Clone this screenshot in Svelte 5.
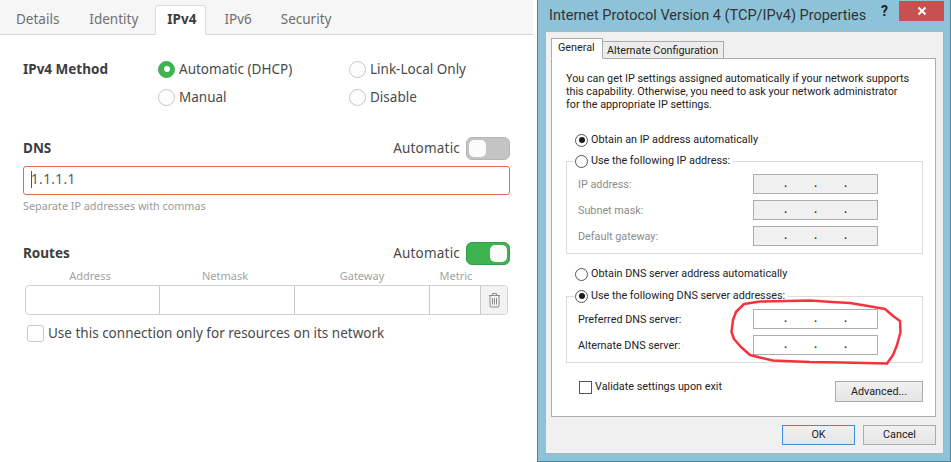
<script lang="ts">
	const tabs = ['Details', 'Identity', 'IPv4', 'IPv6', 'Security'];
	const methods = [
		{ label: 'Automatic (DHCP)', on: true },
		{ label: 'Link-Local Only', on: false },
		{ label: 'Manual', on: false },
		{ label: 'Disable', on: false }
	];
	const routeCols = ['Address', 'Netmask', 'Gateway', 'Metric'];
	const ipRows = ['IP address:', 'Subnet mask:', 'Default gateway:'];
	const dnsRows = ['Preferred DNS server:', 'Alternate DNS server:'];
</script>

{#snippet dots()}
	<span class="ip-dots"><i>.</i><i>.</i><i>.</i></span>
{/snippet}

<div class="page">
	<section class="linux">
		<nav class="strip">
			{#each tabs as tab}
				<span class="strip-tab" class:active={tab === 'IPv4'}>{tab}</span>
			{/each}
		</nav>

		<div class="method">
			<strong>IPv4 Method</strong>
			<div class="method-grid">
				{#each methods as m}
					<span class="option"><span class="radio" class:on={m.on}></span>{m.label}</span>
				{/each}
			</div>
		</div>

		<div class="head dns-head">
			<strong>DNS</strong>
			<span class="auto">Automatic<span class="switch"><span class="knob"></span></span></span>
		</div>
		<div class="dns-input"><span class="caret"></span>1.1.1.1</div>
		<p class="hint">Separate IP addresses with commas</p>

		<div class="head routes-head">
			<strong>Routes</strong>
			<span class="auto">Automatic<span class="switch on"><span class="knob"></span></span></span>
		</div>
		<div class="route-cols">
			{#each routeCols as col}<span>{col}</span>{/each}
		</div>
		<div class="route-row">
			<span></span><span></span><span></span><span></span>
			<span class="trash">
				<svg width="13" height="16" viewBox="0 0 13 16" fill="none" stroke="#8b8b8b">
					<path d="M1 3.5h11M4.5 3.5V1.500h4v2M2 3.5v10.5a1 1 0 0 0 1 1h7a1 1 0 0 0 1-1V3.5" />
					<path d="M4.5 6v6.5M6.500 6v6.5M8.500 6v6.5" />
				</svg>
			</span>
		</div>
		<label class="only"><span class="check"></span>Use this connection only for resources on its network</label>
	</section>

	<section class="win">
		<header class="title">
			<span class="title-text">Internet Protocol Version 4 (TCP/IPv4) Properties</span>
			<span class="help">?</span>
			<span class="close">
				<svg width="10" height="10" viewBox="0 0 10 10" stroke="#fff" stroke-width="2"><path d="M1.500 1.500l7 7M8.500 1.500l-7 7" /></svg>
			</span>
		</header>

		<div class="panel">
			<div class="win-tabs">
				<span class="win-tab active">General</span>
				<span class="win-tab">Alternate Configuration</span>
			</div>
			<div class="box">
				<p class="intro">
					You can get IP settings assigned automatically if your network supports<br />
					this capability. Otherwise, you need to ask your network administrator<br />
					for the appropriate IP settings.
				</p>
				<div class="win-opt first"><span class="win-radio on"></span>Obtain an IP address automatically</div>

				<fieldset class="group">
					<legend class="win-opt"><span class="win-radio"></span>Use the following IP address:</legend>
					{#each ipRows as row}
						<div class="ip-row disabled">
							<span>{row}</span>
							<span class="ip-input">{@render dots()}</span>
						</div>
					{/each}
				</fieldset>

				<div class="win-opt second"><span class="win-radio"></span>Obtain DNS server address automatically</div>

				<fieldset class="group dns">
					<legend class="win-opt"><span class="win-radio on"></span>Use the following DNS server addresses:</legend>
					{#each dnsRows as row}
						<div class="ip-row">
							<span>{row}</span>
							<span class="ip-input">{@render dots()}</span>
						</div>
					{/each}
				</fieldset>

				<div class="validate">
					<span class="win-check"></span>
					<span class="validate-text">Validate settings upon exit</span>
					<span class="win-btn advanced">Advanced...</span>
				</div>
			</div>
			<div class="actions">
				<span class="win-btn ok">OK</span>
				<span class="win-btn">Cancel</span>
			</div>
		</div>

		<!-- hand-drawn marker ring around the DNS fields -->
		<svg class="ring" width="951" height="462" viewBox="0 0 951 462" fill="none" stroke="#f6333d" stroke-width="2.5" stroke-linejoin="round">
			<path d="M760 301.5 L744 304 L736 312 L733 320 L731.5 332 L734 339 L741 347 L750 355 L762 358 L773 360.5 L810 362 L842 362.500 L887 363.500 L893 355 L897 345 L900.500 332 L900 321 L893 316 L885 309 L868 306 L850 303 L832 302 L810 300.500 Z" />
		</svg>
	</section>
</div>

<style>
	:global(body) {
		margin: 0;
		background: #fff;
	}

	.page {
		display: flex;
		width: 951px;
		height: 462px;
		overflow: hidden;
		background: #fff;
	}

	/* left: gnome network settings */
	.linux {
		width: 533px;
		flex: none;
		font-family: 'Noto Sans', sans-serif;
		font-size: 13.500px;
		color: #4a4a4a;
	}

	.linux strong {
		color: #3d3d3d;
		font-weight: 700;
	}

	.strip {
		display: flex;
		align-items: flex-end;
		height: 34px;
		padding-left: 3px;
		background: #f6f6f6;
		border-bottom: 1px solid #d6d6da;
	}

	.strip-tab {
		height: 30px;
		line-height: 27px;
		padding: 0 12px;
		margin-right: 4px;
		color: #6f6f6f;
		box-sizing: border-box;
		margin-bottom: -1px;
		border: 1px solid transparent;
	}

	.strip-tab:nth-child(4) {
		padding: 0 11px;
	}

	.strip-tab.active {
		padding: 0 9px 0 11px;
		margin-right: 6px;
		background: #fff;
		color: #3d3d3d;
		font-weight: 700;
		border-color: #dcdcdf;
		border-bottom-color: #fff;
		border-radius: 3px 3px 0 0;
	}

	.method {
		display: flex;
		margin: 20px 0 0 23px;
	}

	.method strong {
		width: 135px;
		line-height: 28px;
	}

	.method-grid {
		display: grid;
		grid-template-columns: 191px auto;
		grid-auto-rows: 28px;
		line-height: 27px;
	}

	.option {
		display: flex;
		align-items: center;
		gap: 4px;
	}

	.radio {
		width: 15px;
		height: 15px;
		border: 1px solid #c6c6c6;
		border-radius: 50%;
		background: #fdfdfd;
		position: relative;
	}

	.radio.on {
		background: #3eb34f;
		border-color: #3eb34f;
	}

	.radio.on::after {
		content: '';
		position: absolute;
		left: 4.5px;
		top: 4.5px;
		width: 6px;
		height: 6px;
		border-radius: 50%;
		background: #fff;
	}

	.head {
		display: flex;
		align-items: center;
		justify-content: space-between;
		height: 24px;
		margin: 0 23px;
	}

	.dns-head {
		margin-top: 25px;
	}

	.routes-head {
		margin-top: 27px;
	}

	.auto {
		display: flex;
		align-items: center;
		gap: 6px;
		letter-spacing: 0.2px;
	}

	.switch {
		display: flex;
		width: 44px;
		height: 23px;
		box-sizing: border-box;
		padding: 2px;
		border: 1px solid #b5b5b5;
		border-radius: 6px;
		background: #c4c4c4;
	}

	.switch.on {
		justify-content: flex-end;
		background: #3eb34f;
		border-color: #35a045;
	}

	.knob {
		width: 17px;
		height: 17px;
		border-radius: 5px;
		background: #fbfbfb;
	}

	.dns-input {
		display: flex;
		align-items: center;
		height: 29px;
		margin: 6px 23px 0;
		padding: 0 0 3px 7px;
		box-sizing: border-box;
		width: 487px;
		border: 1px solid #e4694f;
		border-radius: 3px;
		letter-spacing: 0.4px;
		color: #5a5a5a;
	}

	.caret {
		width: 1px;
		height: 17px;
		background: #555;
		margin-right: -1px;
	}

	.hint {
		margin: 3px 0 0 23px;
		font-size: 10.800px;
		line-height: 16px;
		color: #9a9a9a;
	}

	.route-cols {
		display: grid;
		grid-template-columns: 130px 140px 134px 54px;
		margin: 3px 0 0 25px;
		font-size: 11px;
		line-height: 16px;
		text-align: center;
		color: #a3a3a3;
	}

	.route-row {
		display: grid;
		grid-template-columns: 134px 135px 135px 51px 1fr;
		width: 483px;
		height: 30px;
		box-sizing: border-box;
		margin: 1px 0 0 25px;
		border: 1px solid #d0d0d4;
		border-radius: 4px;
	}

	.route-row span {
		border-right: 1px solid #c8c8cc;
	}

	.route-row .trash {
		display: flex;
		align-items: center;
		justify-content: center;
		border: 0;
		background: #f3f3f4;
		border-radius: 0 3px 3px 0;
	}

	.only {
		display: flex;
		align-items: center;
		gap: 4px;
		margin: 9px 0 0 27px;
		line-height: 18px;
	}

	.check {
		width: 15px;
		height: 15px;
		border: 1px solid #c9c9c9;
		border-radius: 3px;
	}

	/* right: windows 8 dialog */
	.win {
		box-sizing: border-box;
		width: 414px;
		height: 462px;
		margin-left: 4px;
		padding: 0 6px 6px 7px;
		flex: none;
		border: 1px solid #4f8199;
		border-top: 0;
		background: #8cc3d9;
		font-family: Roboto, sans-serif;
		font-size: 10.800px;
		color: #222;
		white-space: nowrap;
	}

	.title {
		display: flex;
		height: 31px;
		box-sizing: border-box;
		padding: 1px 0 0 4px;
	}

	.title-text {
		flex: 1;
		font-size: 14.500px;
		line-height: 29px;
		color: #333;
	}

	.help {
		width: 18px;
		font-weight: 700;
		font-size: 14px;
		line-height: 21px;
		color: #222;
	}

	.close {
		display: flex;
		align-items: center;
		justify-content: center;
		width: 45px;
		height: 20px;
		background: #c75050;
	}

	.panel {
		box-sizing: border-box;
		height: 423px;
		padding: 6px 7px 0 5px;
		border: 1px solid #a9b5bb;
		background: #f0f0f0;
	}

	.win-tabs {
		display: flex;
		align-items: flex-end;
		height: 21px;
		position: relative;
		margin-bottom: -1px;
	}

	.win-tab {
		height: 18px;
		width: 121px;
		box-sizing: border-box;
		padding: 0 4px;
		line-height: 17px;
		border: 1px solid #acacac;
		border-left: 0;
		background: #ececec;
	}

	.win-tab.active {
		height: 21px;
		width: 52px;
		padding: 0 6px;
		line-height: 18px;
		border-left: 1px solid #acacac;
		border-bottom-color: #fff;
		background: #fff;
		position: relative;
		z-index: 1;
	}

	.box {
		box-sizing: border-box;
		height: 359px;
		padding: 0 12px 0 14px;
		border: 1px solid #acacac;
		background: #fff;
	}

	.intro {
		margin: 13px 0 0;
		line-height: 13px;
	}

	.win-opt {
		display: flex;
		align-items: center;
		gap: 3px;
		height: 16px;
		line-height: 16px;
	}

	.win-opt.first {
		margin: 21px 0 0 9px;
	}

	.win-opt.second {
		margin: 12px 0 0 9px;
	}

	.win-radio {
		width: 11px;
		height: 11px;
		border: 1px solid #555;
		border-radius: 50%;
		position: relative;
		background: #fff;
	}

	.win-radio.on::after {
		content: '';
		position: absolute;
		left: 2.5px;
		top: 2.500px;
		width: 6px;
		height: 6px;
		border-radius: 50%;
		background: #1a1a1a;
	}

	.group {
		margin: 5px 0 0;
		padding: 5px 44px 7px 11px;
		min-width: 0;
		border: 1px solid #dcdcdc;
	}

	.group legend {
		padding: 0 3px 0 0;
		margin-left: -3px;
	}

	.group.dns {
		margin-top: 6px;
	}

	.ip-row {
		display: flex;
		align-items: center;
		justify-content: space-between;
		height: 20px;
	}

	.ip-row + .ip-row,
	.ip-row + .ip-row.disabled {
		margin-top: 6px;
	}

	.ip-row.disabled {
		color: #8c8c8c;
	}

	.ip-input {
		width: 125px;
		height: 20px;
		box-sizing: border-box;
		border: 1px solid #adadad;
		background: #fff;
	}

	.disabled .ip-input {
		background: #f0f0f0;
	}

	.ip-dots {
		display: flex;
		gap: 27px;
		padding-left: 30px;
		line-height: 18px;
		color: #333;
	}

	.ip-dots i {
		width: 3px;
		font-style: normal;
		font-weight: 700;
		font-size: 11px;
	}

	.validate {
		display: flex;
		align-items: flex-start;
		margin: 18px 0 0 13px;
	}

	.win-check {
		width: 11px;
		height: 11px;
		border: 1px solid #555;
		background: #fff;
	}

	.validate-text {
		flex: 1;
		margin-left: 3px;
		line-height: 12px;
	}

	.win-btn {
		width: 73px;
		height: 20px;
		box-sizing: border-box;
		border: 1px solid #acacac;
		background: linear-gradient(#f0f0f0, #e5e5e5);
		text-align: center;
		line-height: 18px;
		color: #222;
	}

	.win-btn.advanced {
		width: 88px;
		height: 21px;
		line-height: 19px;
	}

	.win-btn.ok {
		border-color: #3c8fdb;
	}

	.actions {
		display: flex;
		justify-content: flex-end;
		gap: 8px;
		margin: 8px 0 0 0;
	}

	.ring {
		position: absolute;
		left: 0;
		top: 0;
		pointer-events: none;
	}
</style>
